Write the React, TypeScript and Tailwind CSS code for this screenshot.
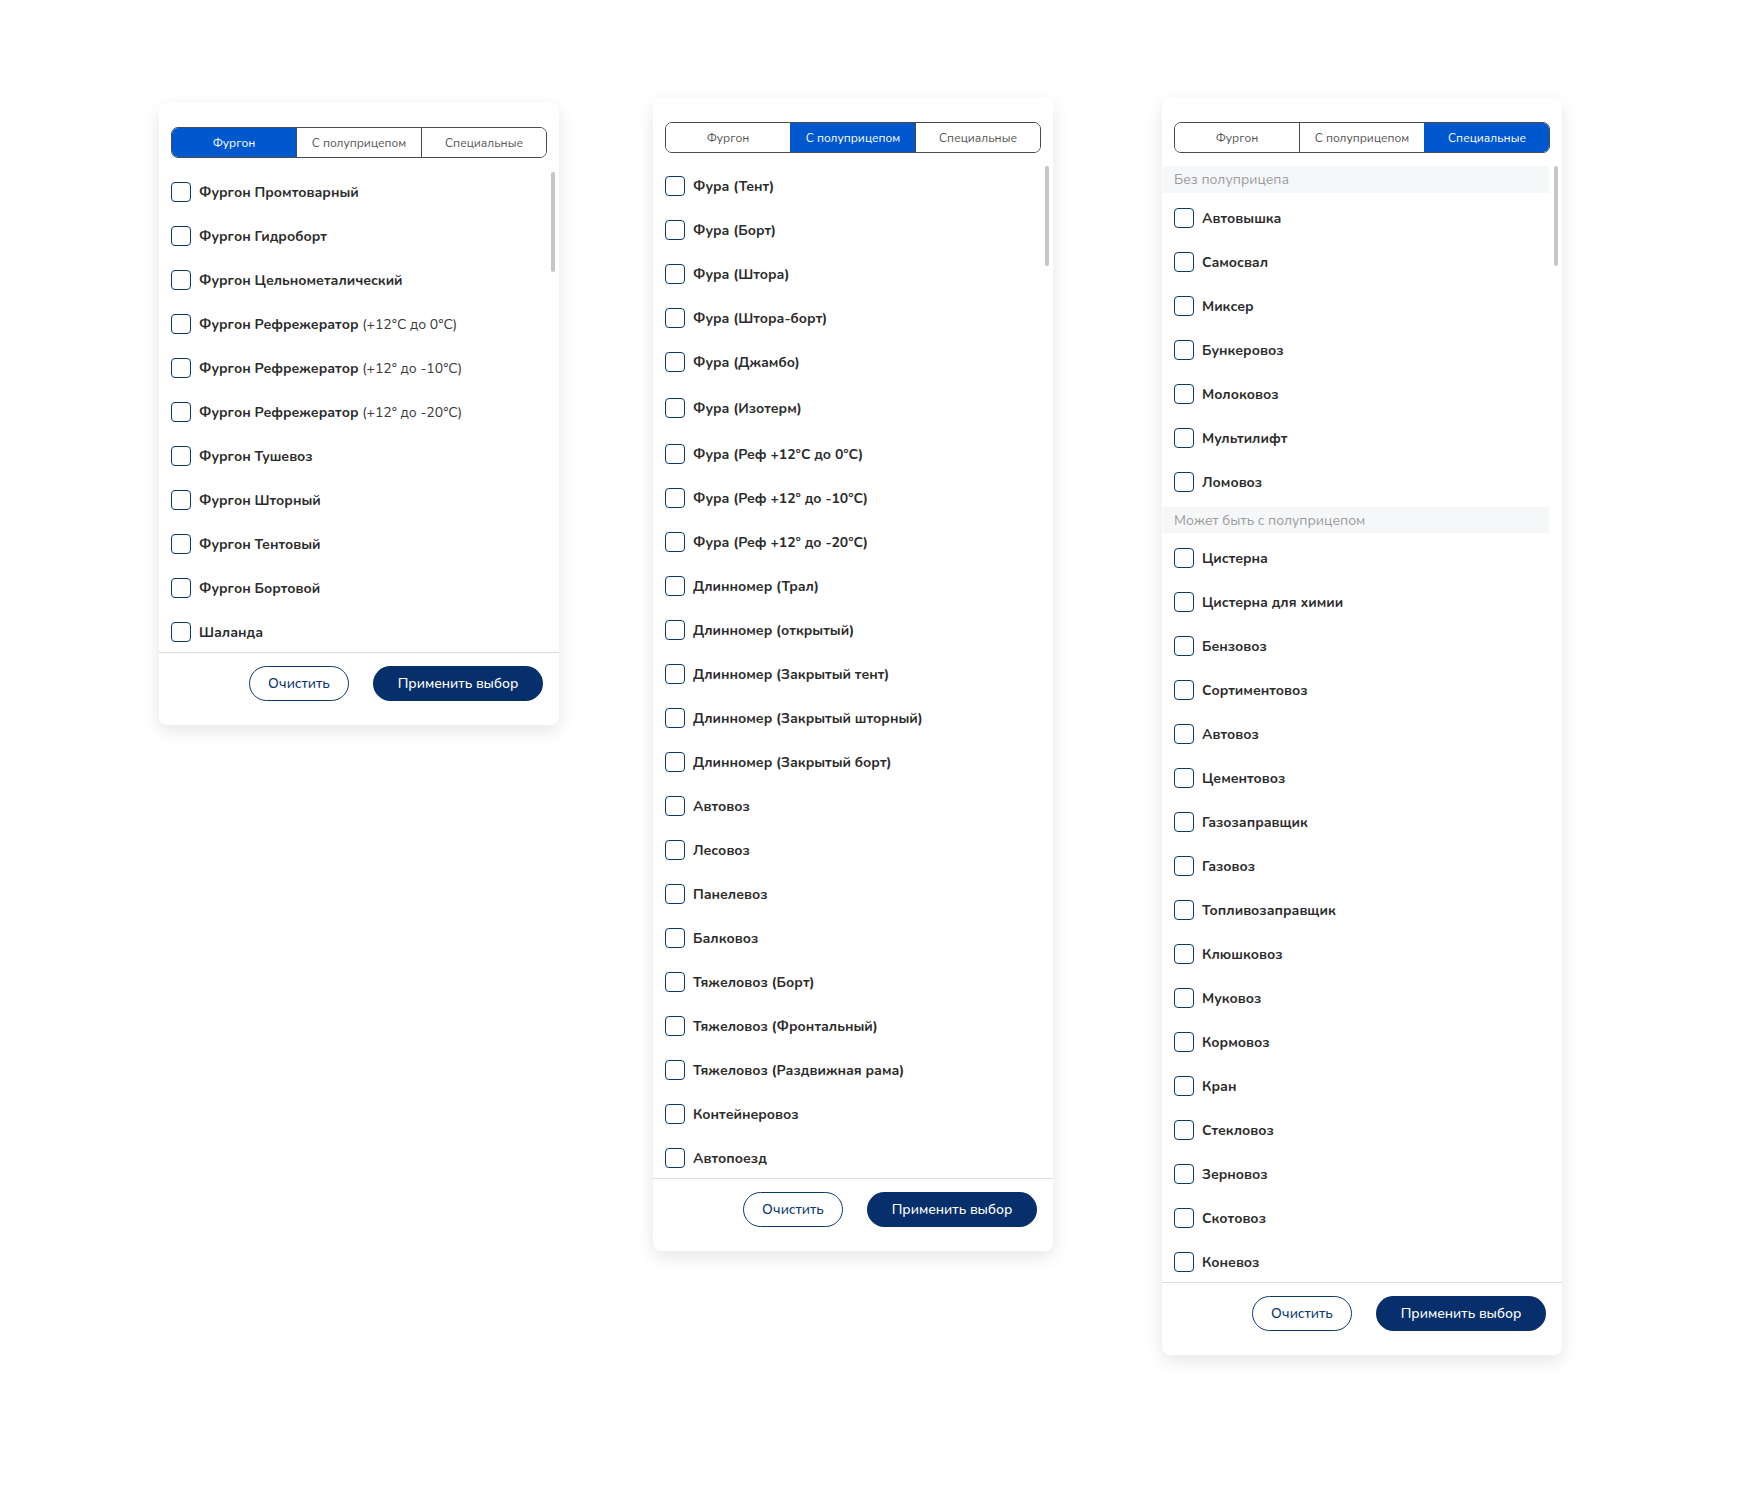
import React from "react";

type Row = { label: string; note?: string; pad?: boolean } | { header: string };

const tabs = ["Фургон", "С полуприцепом", "Специальные"];

const vanRows: Row[] = [
  { label: "Фургон Промтоварный" },
  { label: "Фургон Гидроборт" },
  { label: "Фургон Цельнометалический" },
  { label: "Фургон Рефрежератор", note: "(+12°C до 0°C)" },
  { label: "Фургон Рефрежератор", note: "(+12° до -10°C)" },
  { label: "Фургон Рефрежератор", note: "(+12° до -20°C)" },
  { label: "Фургон Тушевоз" },
  { label: "Фургон Шторный" },
  { label: "Фургон Тентовый" },
  { label: "Фургон Бортовой" },
  { label: "Шаланда" },
];

const trailerRows: Row[] = [
  "Фура (Тент)",
  "Фура (Борт)",
  "Фура (Штора)",
  "Фура (Штора-борт)",
  "Фура (Джамбо)",
  "Фура (Изотерм)",
  "Фура (Реф +12°C до 0°C)",
  "Фура (Реф +12° до -10°C)",
  "Фура (Реф +12° до -20°C)",
  "Длинномер (Трал)",
  "Длинномер (открытый)",
  "Длинномер (Закрытый тент)",
  "Длинномер (Закрытый шторный)",
  "Длинномер (Закрытый борт)",
  "Автовоз",
  "Лесовоз",
  "Панелевоз",
  "Балковоз",
  "Тяжеловоз (Борт)",
  "Тяжеловоз (Фронтальный)",
  "Тяжеловоз (Раздвижная рама)",
  "Контейнеровоз",
  "Автопоезд",
].map((label, i) => ({ label, pad: i === 5 || i === 6 }));

const specialRows: Row[] = [
  { header: "Без полуприцепа" },
  ...["Автовышка", "Самосвал", "Миксер", "Бункеровоз", "Молоковоз", "Мультилифт", "Ломовоз"].map(
    (label) => ({ label })
  ),
  { header: "Может быть с полуприцепом" },
  ...[
    "Цистерна",
    "Цистерна для химии",
    "Бензовоз",
    "Сортиментовоз",
    "Автовоз",
    "Цементовоз",
    "Газозаправщик",
    "Газовоз",
    "Топливозаправщик",
    "Клюшковоз",
    "Муковоз",
    "Кормовоз",
    "Кран",
    "Стекловоз",
    "Зерновоз",
    "Скотовоз",
    "Коневоз",
  ].map((label) => ({ label })),
];

function Tabs({ active }: { active: number }) {
  return (
    <div className="flex h-[31px] rounded-[7px] border border-[#4a4a4a] overflow-hidden">
      {tabs.map((t, i) => (
        <div
          key={t}
          className={
            "flex-1 flex items-center justify-center text-[12px] " +
            (i > 0 ? "border-l border-[#4a4a4a] " : "") +
            (i === active ? "bg-[#0058cf] text-white border-[#0058cf]" : "bg-white text-[#555]")
          }
        >
          {t}
        </div>
      ))}
    </div>
  );
}

function CheckRow({ label, note, pad }: { label: string; note?: string; pad?: boolean }) {
  return (
    <div className={"h-[44px] flex items-center gap-2 shrink-0 " + (pad ? "mt-[2px]" : "")}>
      <span className="w-5 h-5 rounded-[4px] border-[1.5px] border-[#0b3a6f] bg-white shrink-0" />
      <span className="text-[14px] font-bold text-[#2c2c2c] whitespace-nowrap">
        {label}
        {note && <span className="font-normal text-[#3a3a3a]"> {note}</span>}
      </span>
    </div>
  );
}

function Panel({
  active,
  rows,
  listClass,
  className,
}: {
  active: number;
  rows: Row[];
  listClass: string;
  className?: string;
}) {
  let headerCount = 0;
  return (
    <div
      className={
        "w-[400px] shrink-0 bg-white rounded-[8px] shadow-[0_6px_18px_rgba(0,0,0,0.10)] pt-6 " +
        (className ?? "")
      }
    >
      <div className="px-3">
        <Tabs active={active} />
      </div>

      {/* scrollable list */}
      <div className={"relative overflow-hidden " + listClass}>
        <div className="flex flex-col pl-3 pr-[13px]">
          {rows.map((r, i) => {
            if ("header" in r) {
              const first = headerCount++ === 0;
              return (
                <div
                  key={i}
                  className={
                    "mb-[3px] -ml-[11px] pl-[11px] flex items-center bg-[#f6f7f9] text-[14px] text-[#9b9b9b] shrink-0 " +
                    (first ? "mt-[2px] h-[27px]" : "mt-[3px] h-[26px]")
                  }
                >
                  {r.header}
                </div>
              );
            }
            return <CheckRow key={i} label={r.label} note={r.note} pad={r.pad} />;
          })}
        </div>
        <div className="absolute right-1 top-[2px] w-[4px] h-[100px] rounded-full bg-[#c6c6c6]" />
      </div>

      <div className="border-t border-[#dcdcdc] flex justify-end gap-6 pr-4 pt-[13px] pb-6">
        <button className="w-[100px] h-[35px] rounded-full border border-[#0b3a6f] text-[#0b3a6f] text-[14px] font-medium">
          Очистить
        </button>
        <button className="w-[170px] h-[35px] rounded-full bg-[#062f6b] text-white text-[14px] font-medium">
          Применить выбор
        </button>
      </div>
    </div>
  );
}

export default function App() {
  return (
    <div
      className="min-h-[1502px] w-[1748px] bg-white flex items-start pl-[159px] pt-[98px]"
      style={{ fontFamily: "Nunito, Lato, 'Noto Sans', sans-serif" }}
    >
      <Panel active={0} rows={vanRows} listClass="mt-[12px] h-[482px]" className="mt-[5px]" />
      <Panel active={1} rows={trailerRows} listClass="mt-[11px] h-[1014px]" className="ml-[94px]" />
      <Panel active={2} rows={specialRows} listClass="mt-[11px] h-[1118px]" className="ml-[109px]" />
    </div>
  );
}
